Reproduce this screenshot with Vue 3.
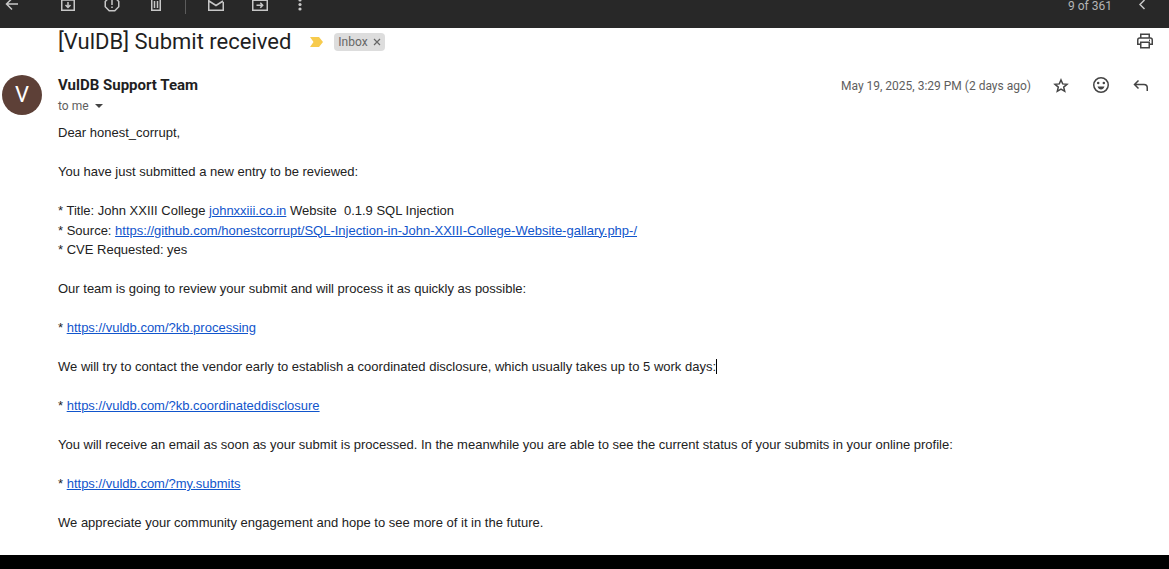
<script setup>
const kb = 'https://vuldb.com/?kb.'
const source = 'https://github.com/honestcorrupt/SQL-Injection-in-John-XXIII-College-Website-gallary.php-/'
</script>

<template>
  <div class="page">
    <header class="toolbar">
      <button class="tool back" aria-label="Back to Inbox">
        <svg viewBox="0 0 20 20"><path d="M16 10H5M10 4.500 4.500 10l5.500 5.500" /></svg>
      </button>
      <div class="group">
        <button class="tool" aria-label="Archive">
          <svg viewBox="0 0 20 20"><path d="M3.750 5.500v10.750h12.500V5.500l-1.500-2H5.250zM3.750 6h12.500M10 8v5.500M7.500 11l2.500 2.500 2.500-2.500" /></svg>
        </button>
        <button class="tool" aria-label="Report spam">
          <svg viewBox="0 0 20 20"><path d="M7.200 3.500h5.600l3.950 4v5.200l-3.950 4H7.200l-3.950-4V7.500zM10 6v5M10 12.500V14" /></svg>
        </button>
        <button class="tool" aria-label="Delete">
          <svg viewBox="0 0 20 20"><path d="M4.500 4.500h11M8 3.500h4M5.750 5v11.250h8.500V5M8.500 7v7M11.500 7v7" /></svg>
        </button>
      </div>
      <span class="divider"></span>
      <div class="group">
        <button class="tool" aria-label="Mark as unread">
          <svg viewBox="0 0 20 20"><path d="M12 4.750H2.750v11.500h14.500V8M3 7l7 4.500L17 7" /></svg>
        </button>
        <button class="tool" aria-label="Move to">
          <svg viewBox="0 0 20 20"><path d="M2.750 16.250V4.750h5l1.500 1.500h8v10zM3 6.250h14M6.500 11.250h6M10.300 8.800l2.400 2.450-2.400 2.450" /></svg>
        </button>
      </div>
      <button class="tool more" aria-label="More">
        <svg viewBox="0 0 20 20" class="solid"><circle cx="10" cy="6" r="1.600" /><circle cx="10" cy="10.500" r="1.600" /><circle cx="10" cy="15" r="1.600" /></svg>
      </button>
      <span class="count">9 of 361</span>
      <button class="tool newer" aria-label="Newer">
        <svg viewBox="0 0 20 20"><path d="m12.500 6-4.500 4.500L12.500 15" /></svg>
      </button>
    </header>

    <main class="mail">
      <div class="subject">
        <h1>[VulDB] Submit received</h1>
        <svg class="important" viewBox="0 0 14 10" aria-label="Important"><path d="M0 0h9l4 5-4 5H0l3.500-5z" /></svg>
        <span class="chip">Inbox<button aria-label="Remove label Inbox"><svg viewBox="0 0 8 8"><path d="m1 1 6 6M7 1 1 7" /></svg></button></span>
        <button class="icon print" aria-label="Print all">
          <svg viewBox="0 0 20 20"><path d="M5.750 6V2.250h8.500V6M5.500 12.250H2.750V8q0-2 2-2h10.500q2 0 2 2v4.250H14.500M5.750 10.250h8.500v5.500h-8.500z" /><path d="M14 8.250h1" /></svg>
        </button>
      </div>

      <div class="sender">
        <span class="avatar">V</span>
        <div class="who">
          <strong>VulDB Support Team</strong>
          <button class="to">to me<svg viewBox="0 0 8 4"><path d="M0 0h8L4 4z" /></svg></button>
        </div>
        <span class="date">May 19, 2025, 3:29 PM (2 days ago)</span>
        <button class="icon" aria-label="Star">
          <svg viewBox="0 0 20 20"><path d="m10 5 1.700 3.900 4.300.4-3.300 2.800 1 4.200-3.700-2.200-3.700 2.200 1-4.200L4 9.300l4.300-.4z" /></svg>
        </button>
        <button class="icon" aria-label="Add reaction">
          <svg viewBox="0 0 20 20"><circle cx="10" cy="10" r="7.250" /><path class="fill" d="M6.500 11.500h7q-1 3-3.500 3t-3.500-3z" /><circle class="fill" cx="7.200" cy="8" r="1.250" /><circle class="fill" cx="12.800" cy="8" r="1.250" /></svg>
        </button>
        <button class="icon" aria-label="Reply">
          <svg viewBox="0 0 20 20"><path d="M7.500 5.500 3.500 9.500l4 4M3.500 9.500H13q3.250 0 3.250 3.250V16" /></svg>
        </button>
      </div>

      <article class="body">
        <p>Dear honest_corrupt,</p>
        <p>You have just submitted a new entry to be reviewed:</p>
        <p>
          * Title: John XXIII College <a href="http://johnxxiii.co.in">johnxxiii.co.in</a> Website &nbsp;0.1.9 SQL Injection<br />
          * Source: <a :href="source">{{ source }}</a><br />
          * CVE Requested: yes
        </p>
        <p>Our team is going to review your submit and will process it as quickly as possible:</p>
        <p>* <a :href="kb + 'processing'">{{ kb }}processing</a></p>
        <p>We will try to contact the vendor early to establish a coordinated disclosure, which usually takes up to 5 work days:<span class="caret"></span></p>
        <p>* <a :href="kb + 'coordinateddisclosure'">{{ kb }}coordinateddisclosure</a></p>
        <p>You will receive an email as soon as your submit is processed. In the meanwhile you are able to see the current status of your submits in your online profile:</p>
        <p>* <a href="https://vuldb.com/?my.submits">https://vuldb.com/?my.submits</a></p>
        <p>We appreciate your community engagement and hope to see more of it in the future.</p>
      </article>
    </main>
    <footer class="base"></footer>
  </div>
</template>

<style>
body { margin: 0; background: #fff; }
</style>

<style scoped>
.page { min-height: 100vh; display: flex; flex-direction: column; font-family: "Google Sans", Roboto, "Liberation Sans", sans-serif; color: #1f1f1f; }
button { border: 0; padding: 0; background: none; font: inherit; color: inherit; cursor: pointer; }
svg { display: block; fill: none; stroke: currentColor; stroke-width: 1.5; }
.toolbar { height: 28px; display: flex; align-items: flex-start; overflow: hidden; background: #282828; color: #c7c7c7; padding: 0 17px 0 2px; }
.tool, .icon { width: 20px; height: 20px; flex: none; }
.tool { margin-top: -6px; }
.tool svg, .icon svg { width: 20px; height: 20px; }
.solid { fill: currentColor; stroke: none; }
.fill { fill: currentColor; stroke: none; }
.group { display: flex; gap: 24px; }
.back { margin-right: 36px; }
.divider { width: 1px; height: 14px; background: #5c5c5c; margin: 0 20px 0 19px; }
.more { margin-left: 20px; }
.count { margin-left: auto; font-size: 12px; line-height: 12px; color: #b5b5b5; }
.newer { margin-left: 20px; }
.mail { padding: 0 14px 22px 58px; }
.subject { display: flex; align-items: center; height: 27px; }
h1 { margin: 0; font-size: 22px; line-height: 27px; font-weight: 400; white-space: nowrap; }
.important { width: 14px; height: 10px; margin: 0 10px 0 19px; fill: #f7cb4d; stroke: none; }
.chip { display: flex; align-items: center; gap: 5px; height: 18px; padding: 0 4px; border-radius: 4px; background: #ddd; color: #666; font-size: 12px; }
.chip svg { width: 8px; height: 8px; stroke-width: 1.2; }
.icon { color: #444; }
.print { margin-left: auto; }
.sender { display: flex; align-items: flex-start; gap: 20px; padding-top: 20px; margin-right: 4px; margin-left: -56px; }
.avatar { width: 40px; height: 40px; border-radius: 50%; background: #5d4037; color: #fff; font-size: 22px; line-height: 40px; text-align: center; }
.who { flex: 1; margin-left: -4px; display: flex; flex-direction: column; align-items: flex-start; }
.who strong { font-size: 15px; line-height: 20px; font-weight: 700; }
.to { display: flex; align-items: center; gap: 6px; font-size: 12px; line-height: 22px; color: #5e5e5e; }
.to svg { width: 8px; height: 4px; fill: #444; stroke: none; }
.date { font-size: 12px; line-height: 22px; color: #5e5e5e; white-space: nowrap; }
.body { font: 13px/1.5 Arial, "Liberation Sans", sans-serif; color: #222; padding-top: 6px; }
p { margin: 0 0 1.5em; }
p:last-child { margin: 0; }
a { color: #15c; }
.caret { display: inline-block; width: 1px; height: 15px; background: #000; vertical-align: -3px; margin-right: -1px; }
.base { flex: 1; min-height: 14px; background: #000; }
</style>
